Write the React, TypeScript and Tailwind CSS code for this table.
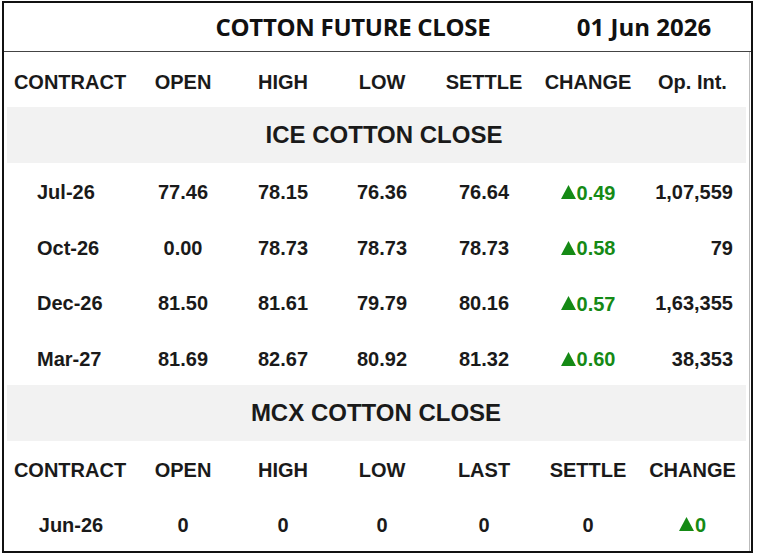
const iceRows = [
  { c: 'Jul-26', open: '77.46', high: '78.15', low: '76.36', settle: '76.64', chg: '0.49', oi: '1,07,559' },
  { c: 'Oct-26', open: '0.00', high: '78.73', low: '78.73', settle: '78.73', chg: '0.58', oi: '79' },
  { c: 'Dec-26', open: '81.50', high: '81.61', low: '79.79', settle: '80.16', chg: '0.57', oi: '1,63,355' },
  { c: 'Mar-27', open: '81.69', high: '82.67', low: '80.92', settle: '81.32', chg: '0.60', oi: '38,353' },
];

const cols = 'grid grid-cols-[126px_100px_100px_98px_106px_102px_1fr] items-center';

function Change({ v }: { v: string }) {
  return (
    <span className="inline-flex items-center text-[#158a15]">
      <svg width="15" height="14" viewBox="0 0 15 14" className="mr-[1px] -mt-[1px]">
        <polygon points="7.5,0 15,14 0,14" fill="#158a15" />
      </svg>
      {v}
    </span>
  );
}

function Band({ title, shift }: { title: string; shift: string }) {
  return (
    <div className="h-[56px] bg-[#f2f2f2] flex items-center justify-center text-[24px] font-bold">
      <span className={shift}>{title}</span>
    </div>
  );
}

export default function App() {
  return (
    <div className="pt-[1px] pl-[2px] bg-white w-[757px] h-[555px]">
      <div
        className="w-[751px] h-[552px] border-2 border-[#111] text-[#1a1a1a]"
        style={{ fontFamily: '"Liberation Sans", Arial, sans-serif' }}
      >
        <div
          className="h-[49px] grid grid-cols-[128px_442px_140px_1fr] items-center border-b border-[#444] font-bold text-[24px] text-[#111]"
          style={{ fontFamily: '"Open Sans", "Noto Sans", sans-serif' }}
        >
          <div />
          <div className="text-center tracking-[-0.3px]">COTTON FUTURE CLOSE</div>
          <div className="text-center">01 Jun 2026</div>
          <div />
        </div>
        <div className="px-[3px] border-r border-[#bbb] mr-[1px] h-[499px] text-[20px] font-bold">
          <div className={`${cols} h-[55px] pt-[5px] text-center`}>
            <div>CONTRACT</div>
            <div>OPEN</div>
            <div>HIGH</div>
            <div>LOW</div>
            <div>SETTLE</div>
            <div>CHANGE</div>
            <div>Op. Int.</div>
          </div>
          <Band title="ICE COTTON CLOSE" shift="ml-[15px]" />
          {iceRows.map((r) => (
            <div key={r.c} className={`${cols} h-[55.5px] pt-[3px] text-center`}>
              <div className="text-left pl-[30px]">{r.c}</div>
              <div>{r.open}</div>
              <div>{r.high}</div>
              <div>{r.low}</div>
              <div>{r.settle}</div>
              <div>
                <Change v={r.chg} />
              </div>
              <div className="text-right pr-[13px]">{r.oi}</div>
            </div>
          ))}
          <Band title="MCX COTTON CLOSE" shift="-ml-[1px]" />
          <div className={`${cols} h-[56px] pt-[1px] text-center`}>
            <div>CONTRACT</div>
            <div>OPEN</div>
            <div>HIGH</div>
            <div>LOW</div>
            <div>LAST</div>
            <div>SETTLE</div>
            <div>CHANGE</div>
          </div>
          <div className={`${cols} h-[54px] pt-[1px] text-center`}>
            <div className="pl-[2px]">Jun-26</div>
            <div>0</div>
            <div>0</div>
            <div>0</div>
            <div>0</div>
            <div>0</div>
            <div>
              <Change v="0" />
            </div>
          </div>
        </div>
      </div>
    </div>
  );
}
